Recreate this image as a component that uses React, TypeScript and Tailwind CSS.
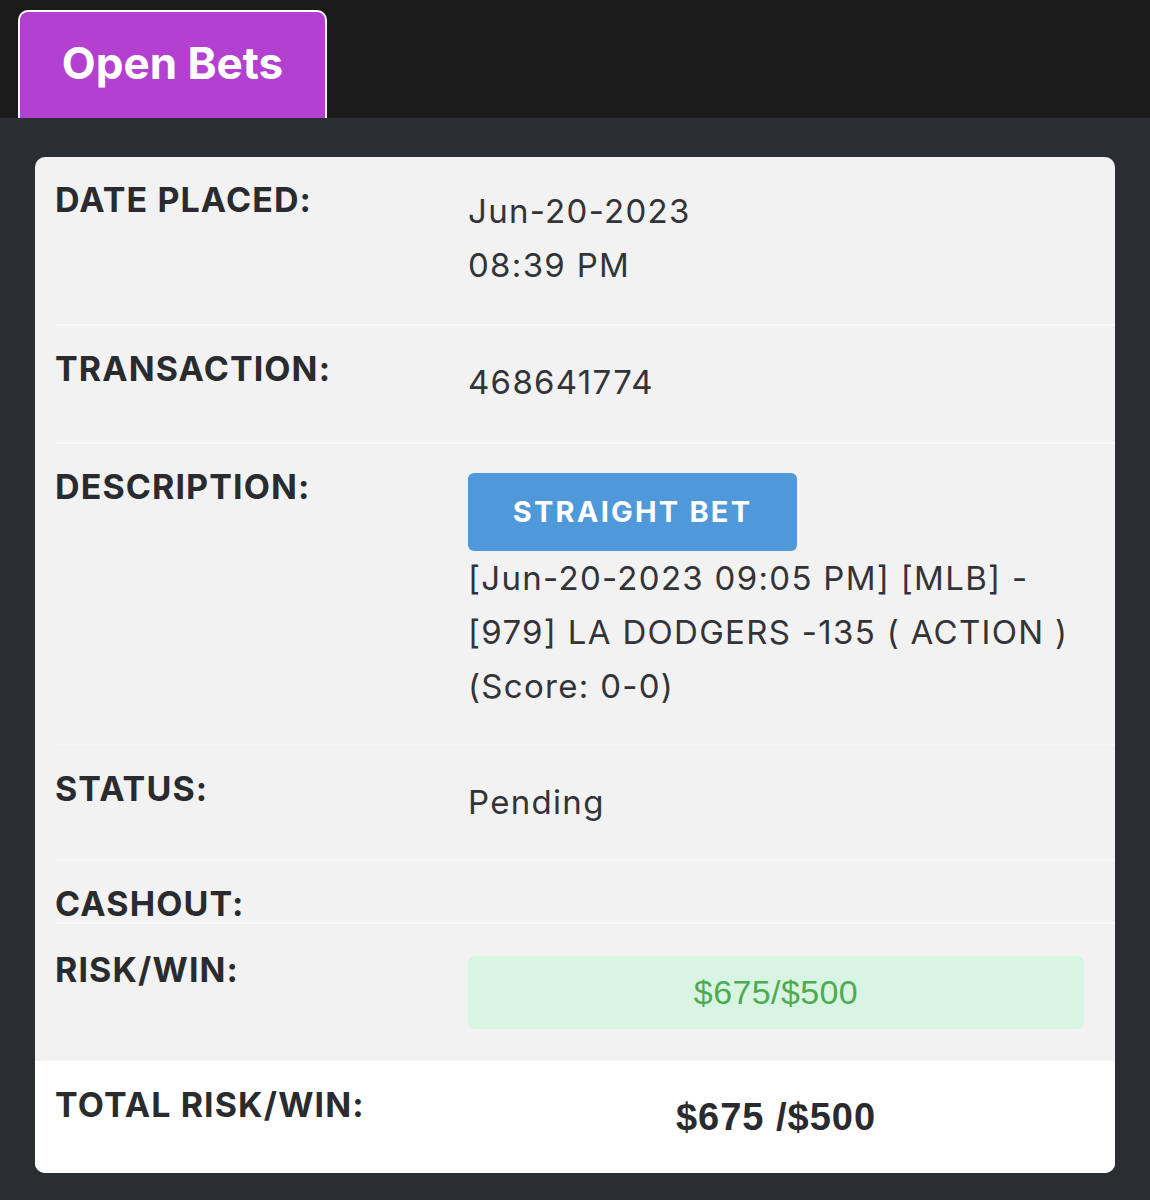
import React from "react";

const sans = { fontFamily: "Inter, 'Noto Sans', sans-serif" };
const arial = { fontFamily: "'Liberation Sans', Arial, sans-serif" };

const labelCls =
  "text-[34px] font-bold leading-[40px] tracking-[1.1px] text-[#2a2b2e]";

function Row({
  label,
  children,
  pb = "pb-[32px]",
}: {
  label: string;
  children: React.ReactNode;
  pb?: string;
}) {
  return (
    <div className="flex border-b-2 border-[#f8f8f8]">
      <div className={`w-[413px] shrink-0 pt-[23px] ${labelCls}`}>{label}</div>
      <div
        className={`flex-1 ${pb} pr-[31px] pt-[29px] text-[33px] leading-[54px] tracking-[1.3px] text-[#333438]`}
      >
        {children}
      </div>
    </div>
  );
}

export default function App() {
  return (
    <div className="min-h-[1200px] bg-[#2a2d31]" style={sans}>
      <div className="flex h-[118px] items-end bg-[#1b1b1b] px-[18px]">
        <div className="flex h-[108px] w-[309px] items-center justify-center rounded-t-[10px] border-2 border-b-0 border-white bg-[#b340d1] pb-[4px] text-[44px] font-bold text-white">
          Open Bets
        </div>
      </div>

      <div className="px-[35px] pb-[28px] pt-[39px]">
        <div className="overflow-hidden rounded-[10px] bg-[#f2f2f2]">
          <div className="pl-[20px]">
            <Row label="DATE PLACED:" pb="pb-[32px]">
              <div className="-mt-[2px]">Jun-20-2023</div>
              <div>08:39 PM</div>
            </Row>
            <Row label="TRANSACTION:" pb="pb-[33px]">
              <div>468641774</div>
            </Row>
            <Row label="DESCRIPTION:" pb="pb-[31px]">
              <div className="inline-flex h-[78px] w-[329px] items-center justify-center rounded-[6px] bg-[#4f98d9] text-[29px] font-bold tracking-[2.2px] text-white">
                STRAIGHT BET
              </div>
              <div>
                [Jun-20-2023 09:05 PM] [MLB] -
                <br />
                [979] LA DODGERS -135 ( ACTION )
                <br />
                (Score: 0-0)
              </div>
            </Row>
            <Row label="STATUS:" pb="pb-[30px]">
              <div>Pending</div>
            </Row>
            <div className="flex border-b-2 border-[#f8f8f8]">
              <div className={`h-[61px] pt-[23px] ${labelCls}`}>CASHOUT:</div>
            </div>
            <div className="flex">
              <div className={`w-[413px] shrink-0 pt-[26px] ${labelCls}`}>
                RISK/WIN:
              </div>
              <div className="flex-1 pb-[32px] pr-[31px] pt-[32px]">
                <div
                  className="flex h-[73px] items-center justify-center rounded-[6px] bg-[#d8f5e3] text-[34px] tracking-[0.4px] text-[#4fab52]"
                  style={arial}
                >
                  $675/$500
                </div>
              </div>
            </div>
          </div>
          <div className="flex h-[112px] bg-white pl-[20px]">
            <div className={`w-[413px] shrink-0 pt-[24px] ${labelCls}`}>
              TOTAL RISK/WIN:
            </div>
            <div
              className="flex flex-1 justify-center pr-[31px] pt-[34px] text-[38px] font-bold leading-[44px] tracking-[1px] text-[#2a2b2e]"
              style={arial}
            >
              $675 /$500
            </div>
          </div>
        </div>
      </div>
    </div>
  );
}
